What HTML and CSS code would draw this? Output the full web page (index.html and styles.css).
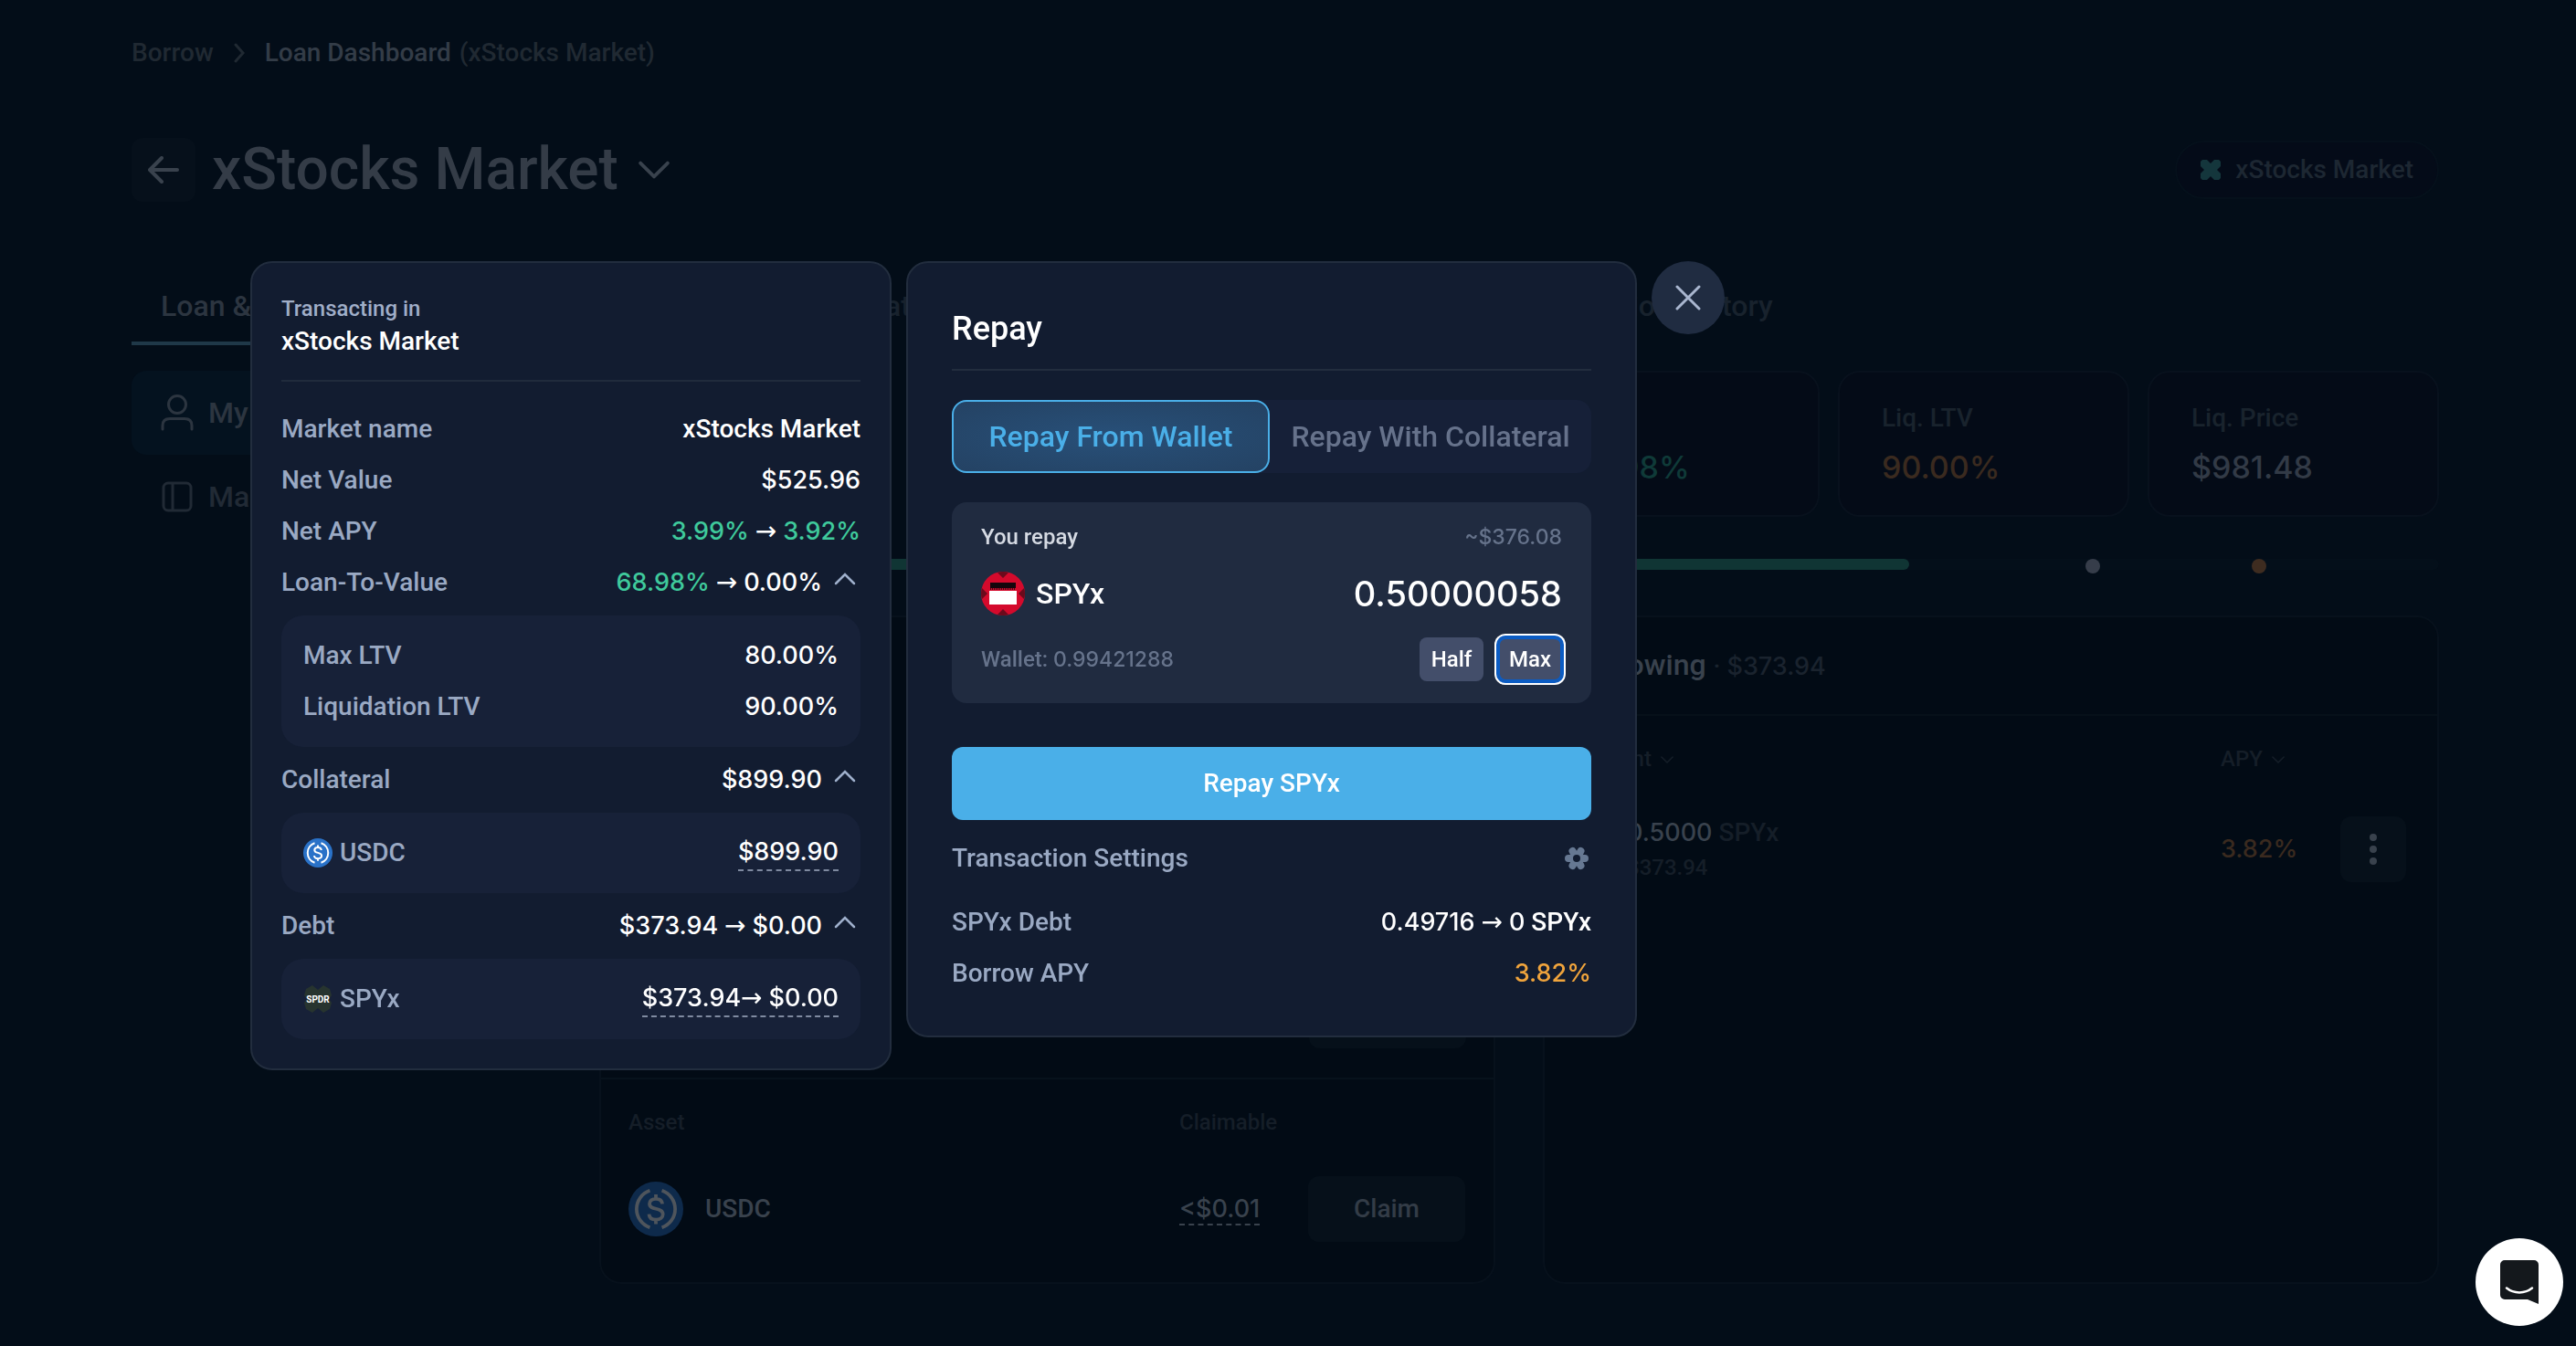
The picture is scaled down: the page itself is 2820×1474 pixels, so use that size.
FILE: index.html
```
<!DOCTYPE html>
<html lang="en">

<head>
    <meta charset="UTF-8">
    <meta name="viewport" content="width=device-width, initial-scale=1.0">
    <title>Loan Dashboard</title>
    <link rel="stylesheet" href="styles.css">
</head>

<body>
    <!-- shared icons -->
    <svg class="sprite" aria-hidden="true">
        <symbol id="usdc" viewBox="0 0 32 32">
            <circle class="coin" cx="16" cy="16" r="16" />
            <g class="coin-line" fill="none" stroke-width="2" stroke-linecap="butt">
                <path d="M12.5 5.2a11.4 11.4 0 0 0 0 21.6M19.5 5.2a11.4 11.4 0 0 1 0 21.6" />
                <path d="M19.8 13c-.2-1.900-1.500-3-3.800-3-2.200 0-3.700 1.100-3.700 2.900 0 4.200 7.800 1.700 7.800 6.200 0 1.900-1.600 3.100-4 3.100-2.500 0-4-1.200-4.100-3.200M16 7.500v2.800M16 22v2.800" />
            </g>
        </symbol>
        <symbol id="up" viewBox="0 0 32 32">
            <path d="M5 17 15 7l10 10" fill="none" stroke="currentColor" stroke-width="2.500" stroke-linecap="round" />
        </symbol>
        <symbol id="down" viewBox="0 0 32 32">
            <path d="M2 9l14 14L30 9" fill="none" stroke="currentColor" stroke-width="3.500" stroke-linecap="round" stroke-linejoin="round" />
        </symbol>
    </svg>

    <div class="page">
        <nav class="breadcrumb" aria-label="Breadcrumb">
            <a href="#borrow">Borrow</a>
            <svg width="12" height="22" viewBox="0 0 12 22"><path d="M2 2l8 9-8 9" fill="none" stroke="currentColor" stroke-width="3" stroke-linecap="round" /></svg>
            <span><strong>Loan Dashboard</strong> (xStocks Market)</span>
        </nav>

        <header class="page-header">
            <button type="button" class="back" aria-label="Back">
                <svg width="34" height="30" viewBox="0 0 34 30"><path d="M15 2 2 15l13 13M3 15h29" fill="none" stroke="currentColor" stroke-width="4" stroke-linecap="round" stroke-linejoin="round" /></svg>
            </button>
            <h1>xStocks Market</h1>
            <svg width="34" height="34"><use href="#down" /></svg>
            <span class="badge">
                <svg width="22" height="22" viewBox="0 0 22 22"><path d="M2 0h5l4 4 4-4h5l2 2v5l-4 4 4 4v5l-2 2h-5l-4-4-4 4H2l-2-2v-5l4-4-4-4V2z" fill="#14363c" /></svg>
                xStocks Market
            </span>
        </header>

        <nav class="tabs" aria-label="Dashboard">
            <a href="#loan" class="active">Loan &amp;</a>
            <a href="#sim">Simulator</a>
            <a href="#history">Position History</a>
        </nav>

        <div class="dashboard">
            <nav class="side" aria-label="Sections">
                <a href="#my" class="active">
                    <svg width="36" height="40" viewBox="0 0 36 40"><g fill="none" stroke="currentColor" stroke-width="3" stroke-linecap="round"><circle cx="18" cy="11" r="9.500" /><path d="M2 38v-4c0-5 3-7.500 8-7.500h16c5 0 8 2.500 8 7.500v4" /></g></svg>
                    My
                </a>
                <a href="#market">
                    <svg width="36" height="34" viewBox="0 0 36 34"><g fill="none" stroke="currentColor" stroke-width="3"><rect x="3" y="2" width="30" height="30" rx="5" /><path d="M13 2v30" /></g></svg>
                    Ma
                </a>
            </nav>

            <main>
                <div class="stats">
                    <div class="stat"></div>
                    <div class="stat"></div>
                    <div class="stat"></div>
                    <div class="stat"><span>LTV</span><b class="dim-green">68.98%</b></div>
                    <div class="stat"><span>Liq. LTV</span><b class="dim-orange">90.00%</b></div>
                    <div class="stat"><span>Liq. Price</span><b>$981.48</b></div>
                </div>

                <div class="bar">
                    <div class="bar-fill" style="width: 71.2%"></div>
                    <i class="dot" style="left: 81.2%"></i>
                    <i class="dot dot-orange" style="left: 90.2%"></i>
                </div>

                <div class="columns">
                    <section class="box assets">
                        <div class="assets-top"><button type="button" class="soft" aria-label="Manage"></button></div>
                        <table>
                            <tr>
                                <th>Asset</th>
                                <th class="claimable">Claimable</th>
                                <th class="action"></th>
                            </tr>
                            <tr>
                                <td><div class="coin-cell"><svg class="dim-coin" width="60" height="60"><use href="#usdc" /></svg>USDC</div></td>
                                <td><span class="dashed num">&lt;$0.01</span></td>
                                <td><button type="button" class="soft">Claim</button></td>
                            </tr>
                        </table>
                    </section>

                    <section class="box loans">
                        <h2>Borrowing <span>· <span class="num">$373.94</span></span></h2>
                        <table>
                            <tr>
                                <th class="amount">Amount <svg width="14" height="14"><use href="#down" /></svg></th>
                                <th>APY <svg width="14" height="14"><use href="#down" /></svg></th>
                                <th class="menu"></th>
                            </tr>
                            <tr>
                                <td class="amount"><b class="num">0.5000</b> <span>SPYx</span><small>$373.94</small></td>
                                <td class="dim-orange num">3.82%</td>
                                <td class="menu">
                                    <button type="button" class="soft more" aria-label="More">
                                        <svg width="8" height="34" viewBox="0 0 8 34" fill="#39424d"><circle cx="4" cy="4" r="4" /><circle cx="4" cy="17" r="4" /><circle cx="4" cy="30" r="4" /></svg>
                                    </button>
                                </td>
                            </tr>
                        </table>
                    </section>
                </div>
            </main>
        </div>
    </div>

    <!-- repay modal -->
    <div class="modal" role="dialog" aria-label="Repay">
        <aside class="panel summary">
            <header>
                <small>Transacting in</small>
                <strong>xStocks Market</strong>
            </header>
            <div class="row"><span>Market name</span><strong>xStocks Market</strong></div>
            <div class="row"><span>Net Value</span><b>$525.96</b></div>
            <div class="row"><span>Net APY</span><b><em>3.99%</em><i> → </i><em>3.92%</em></b></div>
            <div class="row"><span>Loan-To-Value</span><b><em>68.98%</em><i> → </i>0.00%<svg class="up"><use href="#up" /></svg></b></div>
            <div class="group">
                <div class="row"><span>Max LTV</span><b>80.00%</b></div>
                <div class="row"><span>Liquidation LTV</span><b>90.00%</b></div>
            </div>
            <div class="row"><span>Collateral</span><b>$899.90<svg class="up"><use href="#up" /></svg></b></div>
            <div class="group">
                <div class="row">
                    <span class="token"><svg width="32" height="32"><use href="#usdc" /></svg>USDC</span>
                    <b class="dashed">$899.90</b>
                </div>
            </div>
            <div class="row"><span>Debt</span><b>$373.94<i> → </i>$0.00<svg class="up"><use href="#up" /></svg></b></div>
            <div class="group">
                <div class="row">
                    <span class="token">
                        <svg width="32" height="32" viewBox="0 0 32 32">
                            <path d="M10 1l6 5 6-5 7 4 2 7-3 4 3 4-2 7-7 4-6-5-6 5-7-4-2-7 3-4-3-4 2-7z" fill="#27342f" />
                            <text x="16" y="20" text-anchor="middle" class="spdr">SPDR</text>
                        </svg>SPYx</span>
                    <b class="dashed">$373.94<i>→ </i>$0.00</b>
                </div>
            </div>
        </aside>

        <section class="panel repay">
            <h2>Repay</h2>
            <div class="switch">
                <button type="button" class="active">Repay From Wallet</button>
                <button type="button">Repay With Collateral</button>
            </div>

            <div class="card">
                <div class="line">
                    <label for="amount">You repay</label>
                    <span class="small-num">~$376.08</span>
                </div>
                <div class="line line-amount">
                    <span class="asset">
                        <svg width="48" height="48" viewBox="0 0 48 48">
                            <circle cx="24" cy="24" r="24" fill="#d40a2c" />
                            <path d="M18 1q6-2 12 0l-6 6zM18 47q6 2 12 0l-6-6zM1 18q-2 6 0 12l6-6zM47 18q2 6 0 12l-6-6z" fill="#6b0a1c" />
                            <path d="M10 12h28v6H10z" fill="#14060c" />
                            <path d="M10 19h28" stroke="#14060c" stroke-width="1.500" stroke-dasharray="1 1" />
                            <path d="M9 21h30v15H9z" fill="#fff" />
                        </svg>
                        SPYx
                    </span>
                    <input type="text" id="amount" value="0.50000058">
                </div>
                <div class="line line-wallet">
                    <span>Wallet: <span class="small-num">0.99421288</span></span>
                    <div class="chips">
                        <button type="button">Half</button>
                        <button type="button" class="focused">Max</button>
                    </div>
                </div>
            </div>

            <button type="button" class="submit">Repay SPYx</button>

            <div class="row settings">
                <span>Transaction Settings</span>
                <button type="button" aria-label="Transaction settings">
                    <svg width="26" height="26" viewBox="0 0 26 26">
                        <g stroke="#667892" stroke-width="8" stroke-linecap="round"><path d="M13 13h9M13 13H4M13 13l4.500 8M13 13l-4.500-8M13 13l-4.500 8M13 13l4.500-8" /></g>
                        <circle cx="13" cy="13" r="4" fill="#121c30" />
                    </svg>
                </button>
            </div>
            <div class="row"><span>SPYx Debt</span><b>0.49716<i> → </i>0<i> SPYx</i></b></div>
            <div class="row"><span>Borrow APY</span><b class="orange">3.82%</b></div>
        </section>

        <button type="button" class="close" aria-label="Close">
            <svg width="28" height="28" viewBox="0 0 28 28"><path d="M2 2l24 24M26 2 2 26" stroke="#a9b6cf" stroke-width="3" stroke-linecap="round" /></svg>
        </button>
    </div>

    <button type="button" class="chat" aria-label="Open chat">
        <svg width="42" height="48" viewBox="0 0 42 48">
            <path d="M5 0h32a5 5 0 0 1 5 5v43l-12-5H5a5 5 0 0 1-5-5V5a5 5 0 0 1 5-5z" fill="#14181c" />
            <path d="M7 30.500c8 6.500 20 6.500 28 0" fill="none" stroke="#fff" stroke-width="2.500" stroke-linecap="round" />
        </svg>
    </button>
</body>

</html>
```
FILE: styles.css
```
* {
    box-sizing: border-box;
}

body {
    margin: 0;
    min-height: 100vh;
    overflow: hidden;
    background-color: #030d18;
    color: #39424d;
    font-family: Roboto, "DejaVu Sans", sans-serif;
    font-size: 28px;
    font-weight: 500;
    line-height: 40px;
}

h1, h2 {
    margin: 0;
    font-weight: 500;
}

a {
    color: inherit;
    text-decoration: none;
}

b, strong, em, i {
    font-style: normal;
    font-weight: 500;
}

svg {
    display: block;
    flex: none;
}

button, input {
    padding: 0;
    border: 0;
    background: none;
    color: inherit;
    font: inherit;
}

/* wider figures */
.num, .row b {
    font-family: Inter, sans-serif;
    font-size: 27px;
}

.small-num {
    font-family: Inter, sans-serif;
    font-size: 23px;
}

.sprite {
    position: absolute;
    width: 0;
    height: 0;
}

.coin {
    fill: #2a72c8;
}

.coin-line {
    stroke: #fff;
}

.dim-coin {
    opacity: 0.3;
}

.dashed {
    border-bottom: 2px dashed currentColor;
}

/* page behind the modal */
.page {
    padding: 38px 150px 0 144px;
}

.breadcrumb {
    display: flex;
    align-items: center;
    gap: 22px;
    color: #202932;
}

.breadcrumb strong {
    margin-right: 2px;
    color: #333c47;
}

.page-header {
    display: flex;
    align-items: center;
    margin-top: 68px;
    height: 80px;
}

.back {
    display: flex;
    align-items: center;
    justify-content: center;
    width: 70px;
    height: 70px;
    border-radius: 12px;
    background-color: #06101b;
}

.page-header h1 {
    margin: 0 22px 0 18px;
    font-size: 64px;
    line-height: 80px;
    color: #343c47;
}

.badge {
    display: flex;
    align-items: center;
    gap: 16px;
    height: 64px;
    margin-left: auto;
    padding: 0 26px;
    border: 2px solid #05101b;
    border-radius: 32px;
    background-color: #040b18;
    color: #1d2732;
}

.tabs {
    display: grid;
    grid-template-columns: 336px 562px auto;
    column-gap: 16px;
    justify-content: start;
    margin-top: 70px;
    font-size: 32px;
    line-height: 78px;
    color: #18222d;
}

.tabs a {
    padding: 0 32px;
    border-bottom: 4px solid transparent;
}

.tabs a.active {
    border-color: #1f3848;
    color: #2c3540;
}

.tabs a:nth-child(2) {
    text-align: right;
}

.tabs a:nth-child(3) {
    padding-left: 638px;
}

.dashboard {
    display: grid;
    grid-template-columns: 464px 1fr;
    gap: 48px;
    margin-top: 28px;
}

.side {
    display: flex;
    flex-direction: column;
    font-size: 32px;
    color: #212a35;
}

.side a {
    display: flex;
    align-items: center;
    gap: 16px;
    height: 92px;
    padding: 0 32px;
    border-radius: 16px;
}

.side a.active {
    background-color: #04121f;
    color: #2c3540;
}

.stats {
    display: grid;
    grid-template-columns: repeat(6, 1fr);
    gap: 20px;
}

.stat {
    display: flex;
    flex-direction: column;
    gap: 10px;
    height: 160px;
    padding: 30px 46px 0;
    border: 2px solid #08111d;
    border-radius: 24px;
    background-color: #040b17;
    color: #19232d;
}

.stat b {
    font-family: Inter, sans-serif;
    font-size: 34px;
    line-height: 48px;
    color: #323a46;
}

.stat .dim-green {
    color: #0f3a38;
}

.stat .dim-orange, .dim-orange {
    color: #3a2a1f;
}

.bar {
    position: relative;
    height: 12px;
    margin-top: 46px;
    border-radius: 6px;
    background-color: #040f1a;
}

.bar-fill {
    height: 12px;
    border-radius: 6px;
    background-color: #103534;
}

.dot {
    position: absolute;
    top: 0;
    width: 16px;
    height: 16px;
    margin-left: -8px;
    border-radius: 50%;
    background-color: #363d4a;
}

.dot-orange {
    background-color: #3e2c20;
}

.columns {
    display: grid;
    grid-template-columns: 1fr 1fr;
    gap: 52px;
    margin-top: 50px;
}

.box {
    height: 732px;
    border: 2px solid #07111c;
    border-radius: 24px;
    background-color: #020b15;
}

.box table {
    width: 100%;
    border-collapse: collapse;
}

.box th, .box td {
    padding: 0;
    text-align: left;
}

.box th {
    height: 94px;
    font-size: 24px;
    font-weight: 500;
    color: #151e28;
}

.box th svg {
    display: inline-block;
    margin-left: 4px;
}

.soft {
    width: 172px;
    height: 72px;
    border-radius: 12px;
    background-color: #06101a;
    color: #333c47;
}

.assets-top {
    display: flex;
    align-items: flex-end;
    justify-content: flex-end;
    height: 506px;
    padding: 0 30px 32px;
    border-bottom: 2px solid #07121c;
}

.assets th:first-child, .assets td:first-child {
    padding-left: 30px;
}

.assets td {
    height: 96px;
}

.assets .claimable {
    width: 141px;
}

.assets .action {
    width: 203px;
}

.coin-cell {
    display: flex;
    align-items: center;
    gap: 24px;
}

.loans h2 {
    height: 108px;
    padding-left: 30px;
    border-bottom: 2px solid #06111a;
    font-size: 32px;
    line-height: 104px;
}

.loans h2 > span {
    font-size: 28px;
    color: #1a232e;
}

.loans .amount {
    width: 740px;
    padding-left: 90px;
}

.loans th.amount {
    padding-left: 32px;
}

.loans td {
    height: 104px;
}

.loans td span, .loans small {
    color: #151e28;
}

.loans small {
    display: block;
    font-size: 24px;
    line-height: 36px;
}

.loans .menu {
    width: 106px;
}

.more {
    display: flex;
    align-items: center;
    justify-content: center;
    width: 72px;
}

/* modal */
.modal {
    position: fixed;
    top: 286px;
    left: 274px;
    display: flex;
    align-items: flex-start;
    gap: 16px;
}

.panel {
    border: 2px solid #222d3e;
    border-radius: 24px;
    background-color: #121c30;
    color: #fff;
}

.summary {
    width: 702px;
    padding: 32px;
}

.summary header {
    display: flex;
    flex-direction: column;
    margin-bottom: 24px;
    padding: 2px 0 22px;
    border-bottom: 2px solid #202b3c;
}

.summary header small {
    font-size: 24px;
    line-height: 32px;
    color: #a0aec8;
}

.row {
    display: flex;
    align-items: center;
    justify-content: space-between;
    height: 56px;
}

.row span {
    color: #9aa9c3;
}

.row b {
    display: flex;
    align-items: center;
    white-space: pre;
}

.row i {
    font-family: Roboto, "DejaVu Sans", sans-serif;
    font-size: 28px;
}

.row em {
    color: #3fca9c;
}

.row .up {
    width: 32px;
    height: 32px;
    margin-left: 10px;
    color: #9fb0cc;
}

.row b.dashed {
    border-color: #7f8aa0;
    line-height: 38px;
}

.row b.orange {
    color: #f0a43c;
}

.group {
    margin: 8px 0;
    padding: 16px 24px;
    border-radius: 24px;
    background-color: #172138;
}

.group:last-child {
    margin-bottom: 0;
}

.token {
    display: flex;
    align-items: center;
    gap: 8px;
}

.spdr {
    fill: #fff;
    font-size: 10px;
    font-weight: 700;
}

.repay {
    width: 800px;
    padding: 48px 48px 40px;
}

.repay h2 {
    padding-bottom: 20px;
    border-bottom: 2px solid #222d3e;
    font-size: 36px;
    line-height: 48px;
}

.switch {
    display: grid;
    grid-template-columns: 348px 1fr;
    margin-top: 32px;
    border-radius: 16px;
    background-color: #162038;
    font-size: 32px;
    color: #66728b;
}

.switch button {
    height: 80px;
    border-radius: 16px;
}

.switch .active {
    border: 2px solid #4aafe8;
    background: radial-gradient(#285079, #244263);
    color: #4aafe8;
}

.card {
    margin-top: 32px;
    padding: 20px 32px;
    border-radius: 16px;
    background-color: #202b40;
    font-size: 24px;
    color: #66738b;
}

.line {
    display: flex;
    align-items: center;
    justify-content: space-between;
    height: 36px;
}

.line label {
    color: #d5dae3;
}

.line-amount {
    height: 88px;
    color: #fff;
}

.asset {
    display: flex;
    align-items: center;
    gap: 12px;
    font-size: 32px;
}

.line-amount input {
    width: 360px;
    font-family: Inter, sans-serif;
    font-size: 38px;
    line-height: 48px;
    text-align: right;
    outline: none;
}

.line-wallet {
    height: 56px;
}

.chips {
    display: flex;
    gap: 16px;
    color: #fff;
}

.chips button {
    width: 70px;
    height: 48px;
    border-radius: 8px;
    background-color: #434e6a;
}

.chips .focused {
    box-shadow: inset 0 0 0 2px #0b5cc4, 0 0 0 2px #0b5cc4, 0 0 0 4px #fff;
}

.submit {
    width: 100%;
    height: 80px;
    margin-top: 48px;
    border-radius: 12px;
    background-color: #4aafe8;
}

.settings {
    height: 84px;
}

.settings button {
    margin-right: 3px;
}

.close {
    display: flex;
    align-items: center;
    justify-content: center;
    width: 80px;
    height: 80px;
    border-radius: 50%;
    background-color: #202c41;
}

.chat {
    position: fixed;
    right: 14px;
    bottom: 22px;
    display: flex;
    align-items: center;
    justify-content: center;
    width: 96px;
    height: 96px;
    border-radius: 50%;
    background-color: #fff;
}
```
